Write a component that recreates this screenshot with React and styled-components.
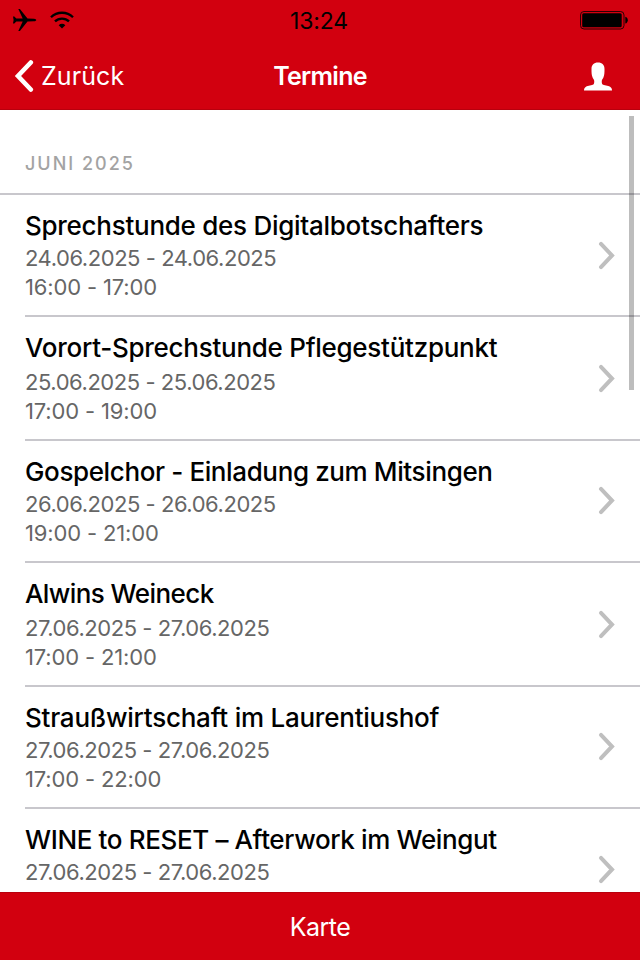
import styled, { createGlobalStyle } from "styled-components";

const colors = {
  brand: "#d2000f",
  brandDark: "#b8000d",
  line: "#c8c7cc",
  muted: "#666666",
  heading: "#a3a3a3",
  chevron: "#bfbfbf",
};

const GlobalStyle = createGlobalStyle`
  * {
    box-sizing: border-box;
  }

  body {
    margin: 0;
    background: #fff;
    font-family: Inter, "Liberation Sans", sans-serif;
  }
`;

const Screen = styled.div`
  position: relative;
  display: flex;
  flex-direction: column;
  width: 640px;
  height: 960px;
  overflow: hidden;
  background: #fff;
`;

const Header = styled.header`
  flex: none;
  height: 110px;
  color: #fff;
  background: ${colors.brand};
  border-bottom: 1px solid ${colors.brandDark};
`;

const StatusBar = styled.div`
  display: grid;
  grid-template-columns: 1fr auto 1fr;
  align-items: center;
  height: 40px;
  padding: 0 12px;
  color: #000;
`;

const StatusIcons = styled.div`
  display: flex;
  align-items: center;
  gap: 13px;
  justify-content: ${({ $end }) => ($end ? "flex-end" : "flex-start")};

  svg {
    display: block;
  }
`;

const Clock = styled.span`
  padding: 2px 2px 0 0;
  font-size: 23px;
  line-height: 28px;
  letter-spacing: -0.1px;
`;

const NavBar = styled.nav`
  display: grid;
  grid-template-columns: 1fr auto 1fr;
  align-items: center;
  height: 69px;
  padding: 3px 14px 0;
`;

const BackButton = styled.button`
  display: flex;
  align-items: center;
  gap: 7px;
  padding: 0;
  border: 0;
  color: inherit;
  background: none;
  font: inherit;
  font-size: 25px;
  line-height: 32px;
  letter-spacing: 0.1px;
`;

const Title = styled.h1`
  margin: 0;
  font-size: 25px;
  font-weight: 600;
  line-height: 32px;
  letter-spacing: -0.7px;
`;

const ProfileButton = styled.button`
  justify-self: end;
  margin-right: 14px;
  padding: 0;
  border: 0;
  color: inherit;
  background: none;

  svg {
    display: block;
  }
`;

const Content = styled.main`
  flex: 1;
  min-height: 0;
  overflow: hidden;
`;

const MonthHeading = styled.h2`
  height: 85px;
  margin: 0;
  padding: 42px 25px 0;
  border-bottom: 2px solid ${colors.line};
  color: ${colors.heading};
  font-size: 18px;
  font-weight: 500;
  line-height: 24px;
  letter-spacing: 2px;
`;

const EventList = styled.ul`
  margin: 0;
  padding: 0 0 0 25px;
  list-style: none;
`;

const EventRow = styled.li`
  display: flex;
  align-items: flex-start;
  justify-content: space-between;
  height: ${({ $tall }) => ($tall ? 124 : 122)}px;
  padding-right: 24px;
  border-bottom: 2px solid ${colors.line};

  > svg {
    flex: none;
    margin-top: ${({ $tall }) => ($tall ? 47 : 45)}px;
  }

  &:first-child > svg,
  &:last-child > svg {
    margin-top: 46px;
  }

  &:last-child {
    height: 83px;
    border-bottom: 0;
  }
`;

const EventText = styled.div`
  padding-top: 15px;
  white-space: nowrap;
`;

const EventTitle = styled.h3`
  margin: 0 0 ${({ $tall }) => ($tall ? 4 : 2)}px;
  font-size: 26px;
  font-weight: 500;
  line-height: 32px;
  letter-spacing: ${({ $tracking }) => $tracking || "-0.27px"};
`;

const EventMeta = styled.p`
  margin: 0;
  color: ${colors.muted};
  font-size: 22px;
  line-height: 29px;
  letter-spacing: -0.45px;
`;

const EventTime = styled(EventMeta)`
  letter-spacing: -0.15px;
`;

const Footer = styled.footer`
  display: flex;
  flex: none;
  align-items: center;
  justify-content: center;
  height: 68px;
  color: #fff;
  background: ${colors.brand};
  border-top: 1px solid ${colors.brandDark};
  font-size: 25px;
  letter-spacing: -0.5px;
`;

const ScrollThumb = styled.div`
  position: absolute;
  top: 116px;
  right: 6px;
  width: 5px;
  height: 274px;
  background: rgba(0, 0, 0, 0.26);
`;

const events = [
  { title: "Sprechstunde des Digitalbotschafters", date: "24.06.2025 - 24.06.2025", time: "16:00 - 17:00" },
  { title: "Vorort-Sprechstunde Pflegestützpunkt", date: "25.06.2025 - 25.06.2025", time: "17:00 - 19:00", tall: true },
  { title: "Gospelchor - Einladung zum Mitsingen", date: "26.06.2025 - 26.06.2025", time: "19:00 - 21:00", tracking: "-0.38px" },
  { title: "Alwins Weineck", date: "27.06.2025 - 27.06.2025", time: "17:00 - 21:00", tall: true, tracking: "-0.58px" },
  { title: "Straußwirtschaft im Laurentiushof", date: "27.06.2025 - 27.06.2025", time: "17:00 - 22:00", tracking: "-0.24px" },
  { title: "WINE to RESET – Afterwork im Weingut", date: "27.06.2025 - 27.06.2025", tracking: "-0.37px" },
];

const AirplaneIcon = () => (
  <svg width="25" height="24" viewBox="0 0 25 24" fill="currentColor">
    <path d="M1 8.600h1.300l2 2h6.400L6.300 1h1.600l7.600 9.400 6.500.3c3 .3 3 2.300 0 2.600l-6.500.3L7.900 23H6.300l4.400-9.600H4.300l-2 2H1l.6-3.400z" />
  </svg>
);

const WifiIcon = () => (
  <svg width="24" height="18" viewBox="0 0 24 18" fill="none" stroke="currentColor" strokeWidth="2.300">
    <path d="M1 6.300a15.600 15.600 0 0 1 22 0" />
    <path d="M5 10.400a10 10 0 0 1 14 0" />
    <path d="M12 17.500l-3.300-3.300a4.700 4.700 0 0 1 6.600 0z" fill="currentColor" stroke="none" />
  </svg>
);

const BatteryIcon = () => (
  <svg width="49" height="20" viewBox="0 0 49 20">
    <rect x="1.500" y="1.500" width="43.500" height="17.500" rx="3.500" fill="none" stroke="currentColor" strokeWidth="0.800" />
    <rect x="3.200" y="3.200" width="39.500" height="14" rx="1.500" fill="currentColor" />
    <path d="M46.300 6.800c3.300.9 3.300 5.900 0 6.800z" fill="currentColor" />
  </svg>
);

const BackIcon = () => (
  <svg width="20" height="32" viewBox="0 0 20 32" fill="none" stroke="currentColor" strokeWidth="4.600" strokeLinecap="round">
    <path d="M16.800 2.500L4 16l12.800 13.500" />
  </svg>
);

const PersonIcon = () => (
  <svg width="28" height="29" viewBox="0 0 28 29" fill="currentColor">
    <path d="M14 .5c4.200 0 6.500 2.500 6.500 6.500 0 3.600-.1 6.200-1 8.300-.5 1.300-1.500 2.200-1.700 3.500-.1 1.500-.1 2.900.8 3.700 1.200 1 5.500 1 7.400 2.200 1.400.9 2 1.900 2 3.800H0c0-1.900.6-2.900 2-3.800 1.900-1.200 6.200-1.200 7.400-2.200.9-.8.9-2.200.8-3.700-.2-1.300-1.200-2.200-1.700-3.500-.9-2.100-1-4.700-1-8.300C7.500 3 9.800.5 14 .5z" />
  </svg>
);

const ChevronIcon = () => (
  <svg width="18" height="29" viewBox="0 0 18 29" fill="none" stroke={colors.chevron} strokeWidth="4" strokeLinecap="round">
    <path d="M3 2.900L14 14.500 3 26.100" />
  </svg>
);

const Event = ({ title, date, time, tall, tracking }) => (
  <EventRow $tall={tall}>
    <EventText>
      <EventTitle $tall={tall} $tracking={tracking}>
        {title}
      </EventTitle>
      <EventMeta>{date}</EventMeta>
      {time && <EventTime>{time}</EventTime>}
    </EventText>
    <ChevronIcon />
  </EventRow>
);

const App = () => (
  <>
    <GlobalStyle />
    <Screen>
      <Header>
        <StatusBar>
          <StatusIcons>
            <AirplaneIcon />
            <WifiIcon />
          </StatusIcons>
          <Clock>13:24</Clock>
          <StatusIcons $end>
            <BatteryIcon />
          </StatusIcons>
        </StatusBar>
        <NavBar>
          <BackButton>
            <BackIcon />
            Zurück
          </BackButton>
          <Title>Termine</Title>
          <ProfileButton aria-label="Profil">
            <PersonIcon />
          </ProfileButton>
        </NavBar>
      </Header>
      <Content>
        <MonthHeading>JUNI 2025</MonthHeading>
        <EventList>
          {events.map((event) => (
            <Event key={event.title} {...event} />
          ))}
        </EventList>
      </Content>
      <Footer>Karte</Footer>
      <ScrollThumb />
    </Screen>
  </>
);

export default App;
